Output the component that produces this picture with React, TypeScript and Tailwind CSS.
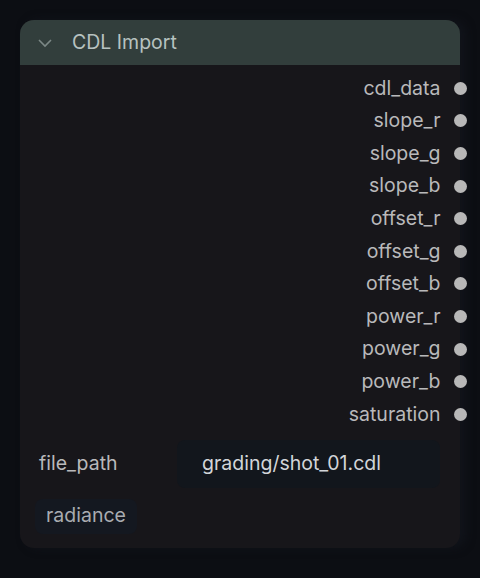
import React from "react";

const outputs = [
  "cdl_data",
  "slope_r",
  "slope_g",
  "slope_b",
  "offset_r",
  "offset_g",
  "offset_b",
  "power_r",
  "power_g",
  "power_b",
  "saturation",
];

const App: React.FC = () => {
  return (
    <div
      className="w-[480px] h-[578px] bg-[#0c0e13] pt-[20px] pl-[20px]"
      style={{ fontFamily: "Inter, 'Noto Sans', sans-serif" }}
    >
      <div className="w-[440px] h-[528px] rounded-[14px] bg-[#17161a] shadow-[6px_0_10px_rgba(20,24,32,0.6)] flex flex-col">
        {/* Header */}
        <div className="h-[45px] rounded-t-[14px] bg-[#323e3c] flex items-center pl-[17px]">
          <svg width="16" height="10" viewBox="0 0 16 10" className="mr-[19px]">
            <path d="M2 2 L8 8 L14 2" fill="none" stroke="#7c8886" strokeWidth="1.6" />
          </svg>
          <span className="text-[19.5px] text-[#b7c2c0]">CDL Import</span>
        </div>

        {/* Outputs */}
        <div className="pt-[7px] flex flex-col">
          {outputs.map((name) => (
            <div key={name} className="h-[32.6px] flex items-center justify-end">
              <span className="text-[19.5px] text-[#b9b9bb] mr-[13px]">{name}</span>
              <span className="w-[13px] h-[13px] rounded-full bg-[#b8b8b8] mr-[-6.5px]" />
            </div>
          ))}
        </div>

        {/* file_path widget */}
        <div className="mt-[9px] flex items-center pl-[19px] pr-[20px]">
          <span className="w-[138px] text-[19.5px] text-[#b9b9bb]">file_path</span>
          <div className="flex-1 h-[48px] rounded-[8px] bg-[#12161c] flex items-center pl-[25px] text-[19.5px] text-[#d2d5d9]">
            grading/shot_01.cdl
          </div>
        </div>

        {/* tag */}
        <div className="mt-[11px] pl-[15px]">
          <span className="inline-flex items-center h-[35px] px-[11px] rounded-[8px] bg-[#141820] text-[19.5px] text-[#a9acb1]">
            radiance
          </span>
        </div>
      </div>
    </div>
  );
};

export default App;
